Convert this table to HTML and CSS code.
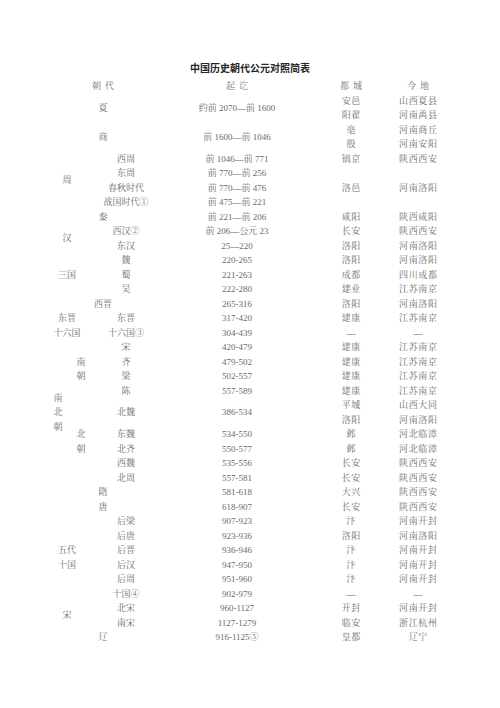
FILE: index.html
```html
<!DOCTYPE html>
<html lang="zh">
<head>
<meta charset="utf-8">
<title>中国历史朝代公元对照简表</title>
<link rel="stylesheet" href="styles.css">
</head>
<body>
<div class="sheet">
  <h1 class="title">中国历史朝代公元对照简表</h1>
  <table class="chrono">
    <colgroup>
      <col class="col-a"><col class="col-b"><col class="col-c"><col class="col-d"><col class="col-e"><col class="col-f">
    </colgroup>
    <thead>
      <tr class="head">
        <th colspan="3" class="spaced">朝代</th>
        <th class="spaced">起讫</th>
        <th class="spaced">都城</th>
        <th class="spaced">今地</th>
      </tr>
    </thead>
    <tbody>
      <tr><td colspan="3" rowspan="2" class="full">夏</td><td rowspan="2">约前 2070—前 1600</td><td class="city">安邑</td><td class="place">山西夏县</td></tr>
      <tr><td class="city">阳翟</td><td class="place">河南禹县</td></tr>
      <tr><td colspan="3" rowspan="2" class="full">商</td><td rowspan="2">前 1600—前 1046</td><td class="city">亳</td><td class="place">河南商丘</td></tr>
      <tr><td class="city">殷</td><td class="place">河南安阳</td></tr>
      <tr><td colspan="2" rowspan="4">周</td><td>西周</td><td>前 1046—前 771</td><td class="city">镐京</td><td class="place">陕西西安</td></tr>
      <tr><td>东周</td><td>前 770—前 256</td><td rowspan="3" class="city">洛邑</td><td rowspan="3" class="place">河南洛阳</td></tr>
      <tr><td>春秋时代</td><td>前 770—前 476</td></tr>
      <tr><td>战国时代①</td><td>前 475—前 221</td></tr>
      <tr><td colspan="3" class="full">秦</td><td>前 221—前 206</td><td class="city">咸阳</td><td class="place">陕西咸阳</td></tr>
      <tr><td colspan="2" rowspan="2">汉</td><td>西汉②</td><td>前 206—公元 23</td><td class="city">长安</td><td class="place">陕西西安</td></tr>
      <tr><td>东汉</td><td>25—220</td><td class="city">洛阳</td><td class="place">河南洛阳</td></tr>
      <tr><td colspan="2" rowspan="3">三国</td><td>魏</td><td>220-265</td><td class="city">洛阳</td><td class="place">河南洛阳</td></tr>
      <tr><td>蜀</td><td>221-263</td><td class="city">成都</td><td class="place">四川成都</td></tr>
      <tr><td>吴</td><td>222-280</td><td class="city">建业</td><td class="place">江苏南京</td></tr>
      <tr><td colspan="3" class="full-r">西晋</td><td>265-316</td><td class="city">洛阳</td><td class="place">河南洛阳</td></tr>
      <tr><td colspan="2">东晋</td><td>东晋</td><td>317-420</td><td class="city">建康</td><td class="place">江苏南京</td></tr>
      <tr><td colspan="2">十六国</td><td>十六国③</td><td>304-439</td><td class="city">—</td><td class="place">—</td></tr>
      <tr><td rowspan="10" class="vert">南<br>北<br>朝</td><td rowspan="4" class="vert-sm">南<br>朝</td><td>宋</td><td>420-479</td><td class="city">建康</td><td class="place">江苏南京</td></tr>
      <tr><td>齐</td><td>479-502</td><td class="city">建康</td><td class="place">江苏南京</td></tr>
      <tr><td>梁</td><td>502-557</td><td class="city">建康</td><td class="place">江苏南京</td></tr>
      <tr><td>陈</td><td>557-589</td><td class="city">建康</td><td class="place">江苏南京</td></tr>
      <tr><td rowspan="6" class="vert-sm">北<br>朝</td><td rowspan="2">北魏</td><td rowspan="2">386-534</td><td class="city">平城</td><td class="place">山西大同</td></tr>
      <tr><td class="city">洛阳</td><td class="place">河南洛阳</td></tr>
      <tr><td>东魏</td><td>534-550</td><td class="city">邺</td><td class="place">河北临漳</td></tr>
      <tr><td>北齐</td><td>550-577</td><td class="city">邺</td><td class="place">河北临漳</td></tr>
      <tr><td>西魏</td><td>535-556</td><td class="city">长安</td><td class="place">陕西西安</td></tr>
      <tr><td>北周</td><td>557-581</td><td class="city">长安</td><td class="place">陕西西安</td></tr>
      <tr><td colspan="3" class="full-l">隋</td><td>581-618</td><td class="city">大兴</td><td class="place">陕西西安</td></tr>
      <tr><td colspan="3" class="full-l">唐</td><td>618-907</td><td class="city">长安</td><td class="place">陕西西安</td></tr>
      <tr><td colspan="2" rowspan="6" class="vert-sm">五代<br>十国</td><td>后梁</td><td>907-923</td><td class="city">汴</td><td class="place">河南开封</td></tr>
      <tr><td>后唐</td><td>923-936</td><td class="city">洛阳</td><td class="place">河南洛阳</td></tr>
      <tr><td>后晋</td><td>936-946</td><td class="city">汴</td><td class="place">河南开封</td></tr>
      <tr><td>后汉</td><td>947-950</td><td class="city">汴</td><td class="place">河南开封</td></tr>
      <tr><td>后周</td><td>951-960</td><td class="city">汴</td><td class="place">河南开封</td></tr>
      <tr><td>十国④</td><td>902-979</td><td class="city">—</td><td class="place">—</td></tr>
      <tr><td colspan="2" rowspan="2">宋</td><td>北宋</td><td>960-1127</td><td class="city">开封</td><td class="place">河南开封</td></tr>
      <tr><td>南宋</td><td>1127-1279</td><td class="city">临安</td><td class="place">浙江杭州</td></tr>
      <tr><td colspan="3" class="full">辽</td><td>916-1125⑤</td><td class="city">皇都</td><td class="place">辽宁</td></tr>
    </tbody>
  </table>
</div>
</body>
</html>
```

FILE: styles.css
```css
html, body {
  margin: 0;
  padding: 0;
  background: #ffffff;
}

.sheet {
  width: 500px;
  padding-top: 60px;
  font-family: "Liberation Serif", "Noto Serif CJK SC", "Noto Sans CJK SC", serif;
  color: #6a6a6a;
}

.title {
  margin: 0 0 3px 0;
  text-align: center;
  font-family: "Noto Sans CJK SC", sans-serif;
  font-size: 10px;
  line-height: 16px;
  font-weight: 700;
  color: #262626;
}

.chrono {
  margin-left: 44px;
  border-collapse: collapse;
  table-layout: fixed;
  width: 402px;
  font-size: 9px;
}

.col-a { width: 28px; }
.col-b { width: 18px; }
.col-c { width: 72px; }
.col-d { width: 150px; }
.col-e { width: 78px; }
.col-f { width: 56px; }

.chrono th,
.chrono td {
  padding: 0;
  height: 14.5px;
  line-height: 14.5px;
  text-align: center;
  vertical-align: middle;
  white-space: nowrap;
  font-weight: 400;
}

.head th {
  color: #707070;
}

.spaced {
  letter-spacing: 4px;
  text-indent: 4px;
}

.full {
  padding-right: 6px;
}

.full-r {
  padding-right: 2px;
}

.full-l {
  padding-right: 12px;
}

.city,
.place {
  letter-spacing: 0.6px;
  text-indent: 0.6px;
}

.vert {
  line-height: 15px;
}

.vert-sm {
  line-height: 14.5px;
}
```
